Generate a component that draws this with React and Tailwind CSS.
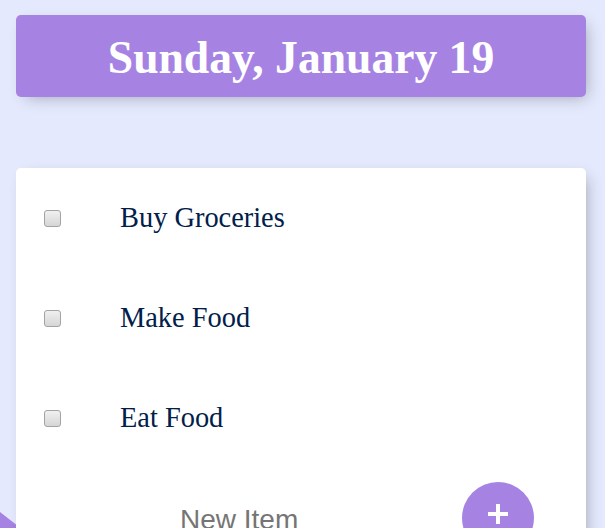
import React, { useState } from "react";

const App = () => {
  const [items, setItems] = useState(["Buy Groceries", "Make Food", "Eat Food"]);
  const [newItem, setNewItem] = useState("");

  const addItem = (e) => {
    e.preventDefault();
    if (!newItem.trim()) return;
    setItems([...items, newItem]);
    setNewItem("");
  };

  return (
    <div className="relative h-[528px] overflow-hidden bg-[#E4E9FD] pl-4 pr-[19px] pt-[15px]">
      {/* purple corner peeking from behind the list */}
      <div className="absolute left-0 top-[512px] h-20 w-20 origin-top-left rotate-[38deg] bg-[#A683E3]" />

      <div className="flex h-[82px] items-center justify-center rounded-[5px] bg-[#A683E3] shadow-[5px_5px_15px_-5px_rgba(0,0,0,0.3)]">
        <h1 className="pt-1 font-['Liberation_Serif',serif] text-[45.6px] font-bold text-white">
          Sunday, January 19
        </h1>
      </div>

      <div className="relative mt-[71px] rounded-[5px] bg-white shadow-[5px_5px_15px_-5px_rgba(0,0,0,0.3)]">
        {items.map((item) => (
          <div key={item} className="flex h-[100px] items-center">
            <input
              type="checkbox"
              className="ml-7 h-[17px] w-[17px] appearance-none rounded-[3px] border border-[#a3a3a3] bg-gradient-to-b from-[#f0f0f0] to-[#d6d6d6]"
            />
            <p className="ml-[59px] font-['Liberation_Serif',serif] text-[28.4px] text-[#00204a]">
              {item}
            </p>
          </div>
        ))}
        <form onSubmit={addItem} className="flex h-[100px] items-start">
          <input
            type="text"
            value={newItem}
            onChange={(e) => setNewItem(e.target.value)}
            placeholder="New Item"
            className="ml-[164px] mt-[31px] w-[260px] bg-transparent font-['Liberation_Sans',sans-serif] text-[28px] text-[#333] outline-none placeholder:text-[#757575]"
          />
          <button
            type="submit"
            className="ml-[22px] mt-[14px] flex h-[72px] w-[72px] items-center justify-center rounded-full bg-[#A683E3] pb-2"
          >
            <svg width="22" height="22" viewBox="0 0 22 22">
              <path d="M11 1v20M1 11h20" stroke="white" strokeWidth="4" />
            </svg>
          </button>
        </form>
      </div>
    </div>
  );
};

export default App;
